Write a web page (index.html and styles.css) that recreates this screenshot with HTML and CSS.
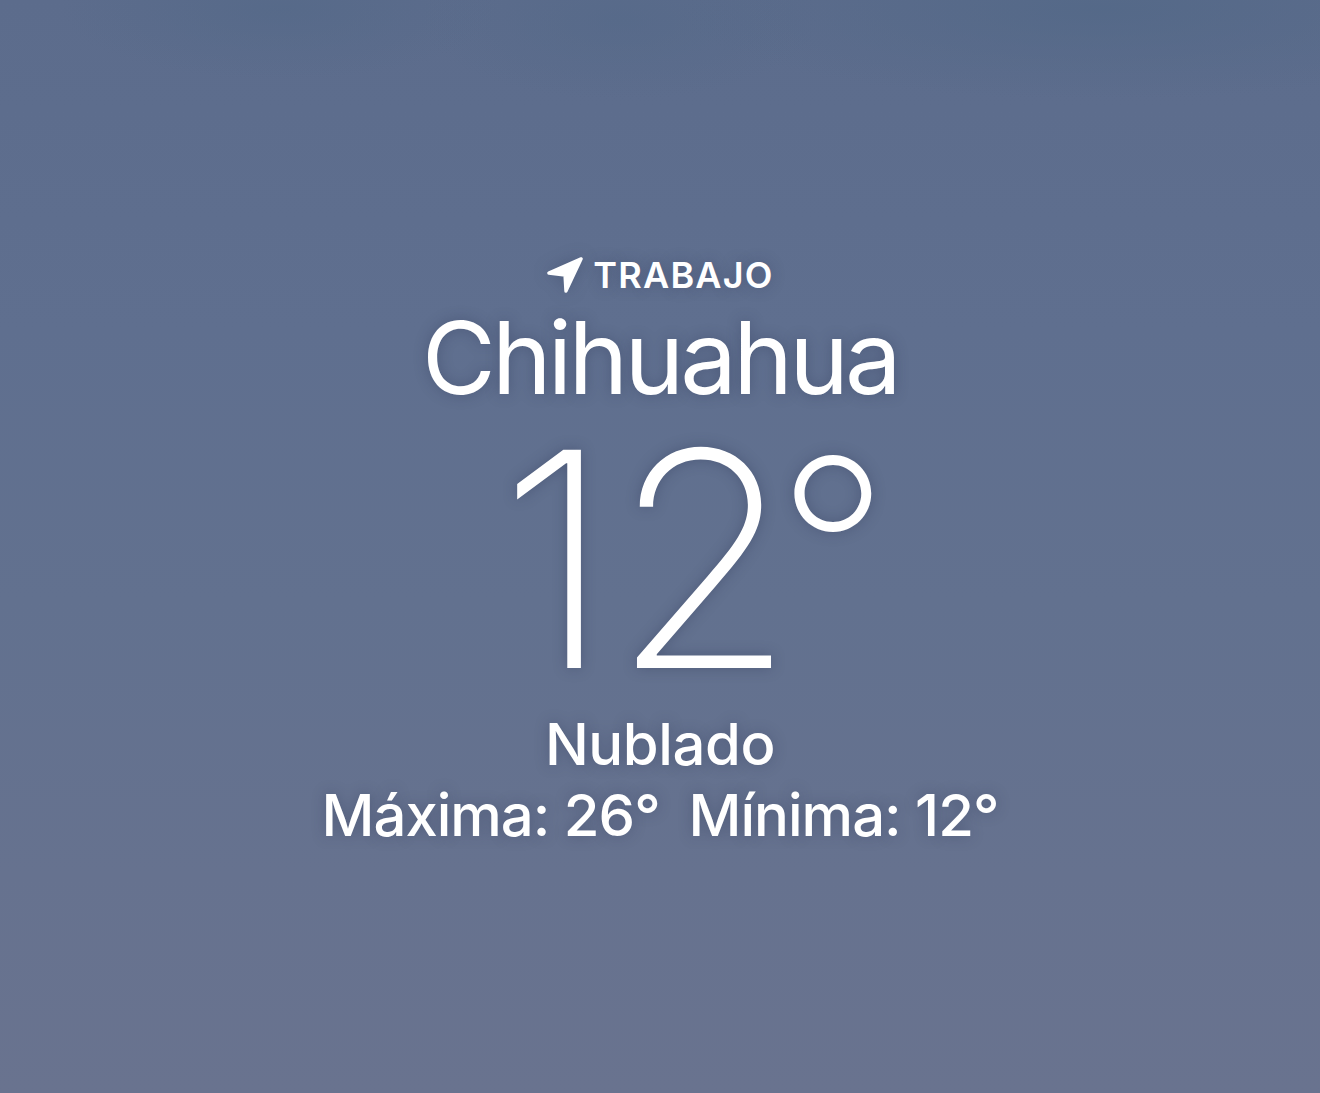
FILE: index.html
```html
<!DOCTYPE html>
<html lang="es">
<head>
<meta charset="utf-8">
<title>Chihuahua</title>
<link rel="stylesheet" href="styles.css">
</head>
<body>
<main class="screen">
  <div class="weather">
    <div class="place">
      <svg class="arrow" viewBox="0 0 40 40" width="38" height="38" aria-hidden="true">
        <path d="M37 3 L3 18 L20 20 L21 37 Z" fill="#fff" stroke="#fff" stroke-width="3.5" stroke-linejoin="round"/>
      </svg>
      <span class="label">TRABAJO</span>
    </div>
    <h1 class="city">Chihuahua</h1>
    <div class="temp"><span class="d1">1</span><span class="d2">2</span><span class="deg">°</span></div>
    <div class="cond">Nublado</div>
    <div class="range">Máxima: 26°&nbsp; Mínima: 12°</div>
  </div>
</main>
</body>
</html>
```
FILE: styles.css
```css
html, body {
  margin: 0;
  padding: 0;
  height: 100%;
}
body {
  font-family: Inter, "Noto Sans", "Liberation Sans", sans-serif;
  color: #fff;
}
.screen {
  width: 1320px;
  height: 1093px;
  background:
    radial-gradient(ellipse 420px 90px at 1100px 10px, rgba(82,104,135,0.75), rgba(82,104,135,0)),
    radial-gradient(ellipse 220px 70px at 280px 10px, rgba(82,104,135,0.55), rgba(82,104,135,0)),
    radial-gradient(ellipse 200px 80px at 620px 20px, rgba(82,104,135,0.5), rgba(82,104,135,0)),
    linear-gradient(180deg, #5c6c8c 0%, #5f6f8f 30%, #62718f 55%, #66728f 80%, #69738f 100%);
  display: flex;
  flex-direction: column;
  align-items: center;
  overflow: hidden;
}
.weather {
  display: flex;
  flex-direction: column;
  align-items: center;
  padding-top: 254px;
  text-shadow: 0 0 14px rgba(40,50,80,0.35);
}
.place {
  display: flex;
  align-items: center;
  gap: 9px;
  height: 42px;
}
.arrow {
  display: block;
  filter: drop-shadow(0 0 8px rgba(40,50,80,0.3));
}
.label {
  font-size: 36px;
  font-weight: 600;
  letter-spacing: 1.2px;
  line-height: 42px;
}
.city {
  margin: 0;
  font-size: 101px;
  font-weight: 400;
  letter-spacing: -3.8px;
  line-height: 123px;
}
.temp {
  font-size: 300px;
  font-weight: 200;
  line-height: 268px;
  margin-top: 6px;
  padding-left: 68px;
}
.d1 {
  letter-spacing: -1.5px;
}
.d2 {
  letter-spacing: -10px;
}
.deg {
  font-size: 250px;
  line-height: 0;
  vertical-align: 29px;
  margin-left: -10px;
}
.cond {
  font-size: 58px;
  font-weight: 500;
  line-height: 70px;
  letter-spacing: -0.4px;
  margin-top: 16px;
}
.range {
  font-size: 58px;
  font-weight: 500;
  line-height: 70px;
  letter-spacing: -1px;
  margin-top: 1px;
}
```
